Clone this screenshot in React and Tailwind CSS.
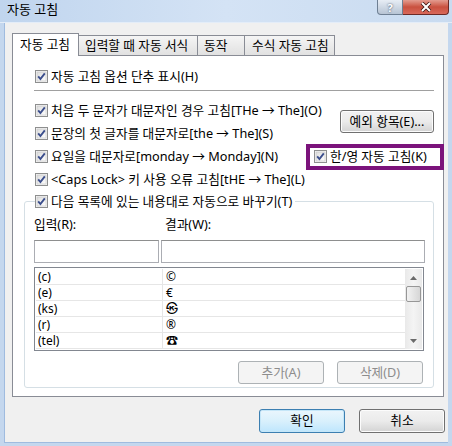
import React from 'react';

const font = { fontFamily: "'Noto Sans', 'Noto Sans CJK KR', sans-serif" };

function Check() {
  return (
    <svg width="13" height="13" viewBox="0 0 13 13" className="shrink-0">
      <defs>
        <linearGradient id="cbg" x1="0" y1="0" x2="1" y2="1">
          <stop offset="0" stopColor="#dcdcdc" />
          <stop offset="1" stopColor="#ffffff" />
        </linearGradient>
      </defs>
      <rect x="0.5" y="0.5" width="12" height="12" fill="#f6f6f6" stroke="#8e8f8f" />
      <rect x="2" y="2" width="9" height="9" fill="url(#cbg)" stroke="#c4c4c4" strokeWidth="0.6" />
      <path d="M3.2 6.4 L5.4 9 L9.8 3.4" fill="none" stroke="#3b4e8c" strokeWidth="1.9" />
    </svg>
  );
}

function CheckRow({ children, className = '' }) {
  return (
    <div className={`flex items-center gap-[3px] whitespace-nowrap text-[12.7px] text-black ${className}`}>
      <Check />
      <span className="leading-none">{children}</span>
    </div>
  );
}

function Btn({ children, className = '', disabled, primary }) {
  return (
    <div
      className={`flex items-center justify-center rounded-[3px] border text-[12.7px] ${
        disabled
          ? 'border-[#adb2b5] bg-[#f4f4f4] text-[#8d8d8d]'
          : primary
          ? 'border-[#3c7fb1] bg-gradient-to-b from-[#eaf6fd] via-[#d9f0fc] to-[#bee6fd] text-black shadow-[inset_0_0_0_1px_#c5e6f8]'
          : 'border-[#707070] bg-gradient-to-b from-[#f2f2f2] via-[#ebebeb] to-[#d3d3d3] text-black shadow-[inset_0_0_0_1px_#fcfcfc]'
      } ${className}`}
    >
      {children}
    </div>
  );
}

const rows = [
  ['(c)', '©'],
  ['(e)', '€'],
  ['(ks)', '㉿'],
  ['(r)', '®'],
  ['(tel)', '☎'],
];

export default function App() {
  return (
    <div style={font} className="w-[452px] h-[446px] flex flex-col bg-[#c4d7ee] overflow-hidden">
      {/* Title bar */}
      <div className="h-[23px] shrink-0 flex items-start bg-gradient-to-r from-[#c0d5ee] via-[#d4e3f5] to-[#c9dbf0] border-b border-[#e4edf8]">
        <span className="pl-[7px] pt-[3px] text-[13px] text-black leading-none">자동 고침</span>
        <div className="ml-auto mr-[3px] flex">
          <div className="w-[26px] h-[15px] rounded-bl-[4px] border border-t-0 border-[#6e7f93] bg-gradient-to-b from-[#e7edf5] to-[#b7c4d4] flex items-center justify-center text-[11px] font-bold leading-none text-white [text-shadow:0_0_2px_#2c3b52]">
            ?
          </div>
          <div className="w-[46px] h-[15px] rounded-br-[4px] border border-t-0 border-l-0 border-[#6c2a26] bg-gradient-to-b from-[#e39c90] via-[#c9503f] to-[#d9695a] flex items-center justify-center">
            <svg width="12" height="10" viewBox="0 0 12 10">
              <path d="M2 1 L10 9 M10 1 L2 9" stroke="#3a1512" strokeWidth="3.6" />
              <path d="M2 1 L10 9 M10 1 L2 9" stroke="#ffffff" strokeWidth="2" />
            </svg>
          </div>
        </div>
      </div>

      {/* Client area */}
      <div className="flex-1 ml-[4px] mr-[4px] mb-[3px] border-l border-b border-[#9fbbdf] bg-[#f0f0f0] flex flex-col pl-[7px] pt-[10px]">
        {/* Tabs */}
        <div className="flex items-end h-[22px] text-[12.7px] text-black">
          <div className="w-[67px] h-[23px] -mb-px z-10 bg-white border border-b-0 border-[#898c95] pl-[7px] pt-[2px] leading-none flex items-center pb-[3px]">
            자동 고침
          </div>
          <div className="w-[119px] h-[20px] border border-l-0 border-b-0 border-[#898c95] bg-gradient-to-b from-[#f5f5f5] to-[#e1e1e1] pl-[6px] flex items-center leading-none">
            입력할 때 자동 서식
          </div>
          <div className="w-[47px] h-[20px] border border-l-0 border-b-0 border-[#898c95] bg-gradient-to-b from-[#f5f5f5] to-[#e1e1e1] pl-[6px] flex items-center leading-none">
            동작
          </div>
          <div className="w-[90px] h-[20px] border border-l-0 border-b-0 border-[#898c95] bg-gradient-to-b from-[#f5f5f5] to-[#e1e1e1] pl-[7px] flex items-center leading-none">
            수식 자동 고침
          </div>
        </div>

        {/* Panel */}
        <div className="w-[432px] h-[342px] border border-[#898c95] bg-white flex flex-col pl-[11px] pt-[9px]">
          <CheckRow className="h-[22px] pl-[11px]">자동 고침 옵션 단추 표시(H)</CheckRow>
          <div className="mt-[3px] mr-[9px] ml-[10px] h-px bg-[#a0a0a0]" />

          <div className="mt-[8px] grid grid-cols-[minmax(0,1fr)_auto] grid-rows-[23px_23px_23px_23px] pl-[11px]">
            <CheckRow className="col-start-1 row-start-1">처음 두 문자가 대문자인 경우 고침[THe → The](O)</CheckRow>
            <CheckRow className="col-start-1 row-start-2">문장의 첫 글자를 대문자로[the → The](S)</CheckRow>
            <CheckRow className="col-start-1 row-start-3">요일을 대문자로[monday → Monday](N)</CheckRow>
            <CheckRow className="col-start-1 row-start-4">&lt;Caps Lock&gt; 키 사용 오류 고침[tHE → The](L)</CheckRow>
            <Btn className="col-start-2 row-start-1 row-span-2 self-center justify-self-end w-[94px] h-[23px] mr-[9px] mt-[-1px]">
              예외 항목(E)...
            </Btn>
            <div className="col-start-2 row-start-3 self-center justify-self-end w-[138px] h-[26px] mr-[-1px] border-[4px] border-[#7b137b] bg-white pl-[4px] flex items-center">
              <CheckRow>한/영 자동 고침(K)</CheckRow>
            </div>
          </div>

          {/* Group box */}
          <div className="mt-[10px] w-[410px] h-[187px] rounded-[3px] border border-[#d5dfe5] flex flex-col pl-[9px]">
            <CheckRow className="-mt-[12px] h-[22px] w-fit ml-[1px] pr-[3px] bg-white">
              다음 목록에 있는 내용대로 자동으로 바꾸기(T)
            </CheckRow>
            <div className="flex mt-[6px] text-[12.7px] leading-none h-[12px]">
              <span className="w-[131px]">입력(R):</span>
              <span>결과(W):</span>
            </div>
            <div className="flex gap-[2px] mt-[10px]">
              <div className="w-[125px] h-[23px] border border-[#abadb3] border-t-[#8e8f8f] bg-white" />
              <div className="w-[264px] h-[23px] border border-[#abadb3] border-t-[#8e8f8f] bg-white" />
            </div>
            <div className="mt-[4px] w-[390px] h-[84px] border border-[#828790] bg-white flex p-px">
              <div className="flex-1 flex flex-col text-[12px] leading-none">
                {rows.map(([a, b]) => (
                  <div key={a} className="h-[16.4px] flex items-center border-b border-[#e6e6e6]">
                    <span className="w-[127px] h-full border-r border-[#e6e6e6] pl-[2px] flex items-center">{a}</span>
                    <span className="pl-[3px]">{b}</span>
                  </div>
                ))}
              </div>
              <div className="w-[17px] flex flex-col items-center bg-gradient-to-r from-[#e9e9e9] via-[#f4f4f4] to-[#e9e9e9]">
                <div className="h-[17px] flex items-center justify-center">
                  <svg width="7" height="4" viewBox="0 0 7 4">
                    <path d="M0 4 L3.5 0 L7 4 Z" fill="#6a6a6a" />
                  </svg>
                </div>
                <div className="w-[15px] h-[16px] rounded-[2px] border border-[#979797] bg-gradient-to-r from-[#f2f2f2] to-[#d6d6d6]" />
                <div className="mt-auto h-[17px] flex items-center justify-center">
                  <svg width="7" height="4" viewBox="0 0 7 4">
                    <path d="M0 0 L7 0 L3.5 4 Z" fill="#6a6a6a" />
                  </svg>
                </div>
              </div>
            </div>
            <div className="flex mt-[10px] pl-[204px] gap-[13px]">
              <Btn disabled className="w-[86px] h-[23px]">추가(A)</Btn>
              <Btn disabled className="w-[86px] h-[23px]">삭제(D)</Btn>
            </div>
          </div>
        </div>

        {/* Bottom buttons */}
        <div className="flex mt-[12px] pl-[247px] gap-[14px]">
          <Btn primary className="w-[86px] h-[24px]">확인</Btn>
          <Btn className="w-[86px] h-[24px]">취소</Btn>
        </div>
      </div>
    </div>
  );
}
